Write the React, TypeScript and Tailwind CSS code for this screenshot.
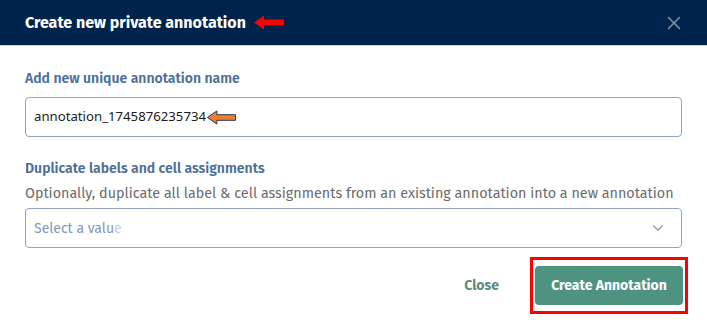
import { X, ChevronDown } from "lucide-react";

const font = { fontFamily: '"Fira Sans", "Open Sans", "Noto Sans", sans-serif' };

function LeftArrow({ color, className }: { color: string; className?: string }) {
  return (
    <svg viewBox="0 0 32 16" className={className}>
      <path d="M1 8 L11 1 L11 5 L31 5 L31 11 L11 11 L11 15 Z" fill={color} stroke={color === "#ff0000" ? "none" : "#1f2d4a"} strokeWidth="1" />
    </svg>
  );
}

export default function App() {
  return (
    <div className="w-[707px] h-[320px] bg-white overflow-hidden" style={font}>
      <div className="h-[46px] bg-[#00234b] flex items-center justify-between pl-[25px] pr-[22px] border-b border-[#c9d2de]">
        <div className="flex items-center gap-[7px]">
          <span className="text-white font-bold text-[16px]">Create new private annotation</span>
          <LeftArrow color="#ff0000" className="w-[32px] h-[17px]" />
        </div>
        <X size={22} strokeWidth={1.6} className="text-[#8393a8]" />
      </div>

      <div className="px-[25px] pt-[24px]">
        <div className="text-[14px] font-semibold text-[#4b6f97] leading-[18px]">Add new unique annotation name</div>
        <div className="mt-[9px] h-[40px] border border-[#8ea3c0] rounded-[4px] flex items-center px-[8px]">
          <span className="text-[13.2px] text-[#1b1b1b]" style={{ fontFamily: '"Noto Sans", "Liberation Sans", sans-serif' }}>
            annotation_1745876235734
          </span>
          <LeftArrow color="#ed7d31" className="w-[31px] h-[15px]" />
        </div>

        <div className="mt-[23px] text-[14px] font-semibold text-[#4b6f97] leading-[18px]">Duplicate labels and cell assignments</div>
        <div className="mt-[7px] text-[14.35px] text-[#6b6b6b] leading-[18px]">
          Optionally, duplicate all label &amp; cell assignments from an existing annotation into a new annotation
        </div>
        <div className="mt-[5px] h-[40px] border border-[#8ea3c0] rounded-[4px] flex items-center justify-between pl-[8px] pr-[14px]">
          <span className="text-[14px] text-[#8297b8]">Select a valu<span className="opacity-50">e</span></span>
          <ChevronDown size={18} strokeWidth={1.5} className="text-[#8297b8]" />
        </div>

        <div className="mt-[9px] flex items-center justify-end gap-[31px]">
          <button className="text-[14px] font-bold text-[#5a8d84]">Close</button>
          <div className="border-[3px] border-[#ff0000] px-[2px] py-[6px] -mr-[6px]">
            <button className="h-[39px] w-[148px] rounded-[4px] bg-[#4e9282] text-white text-[14px] font-bold">
              Create Annotation
            </button>
          </div>
        </div>
      </div>
    </div>
  );
}
